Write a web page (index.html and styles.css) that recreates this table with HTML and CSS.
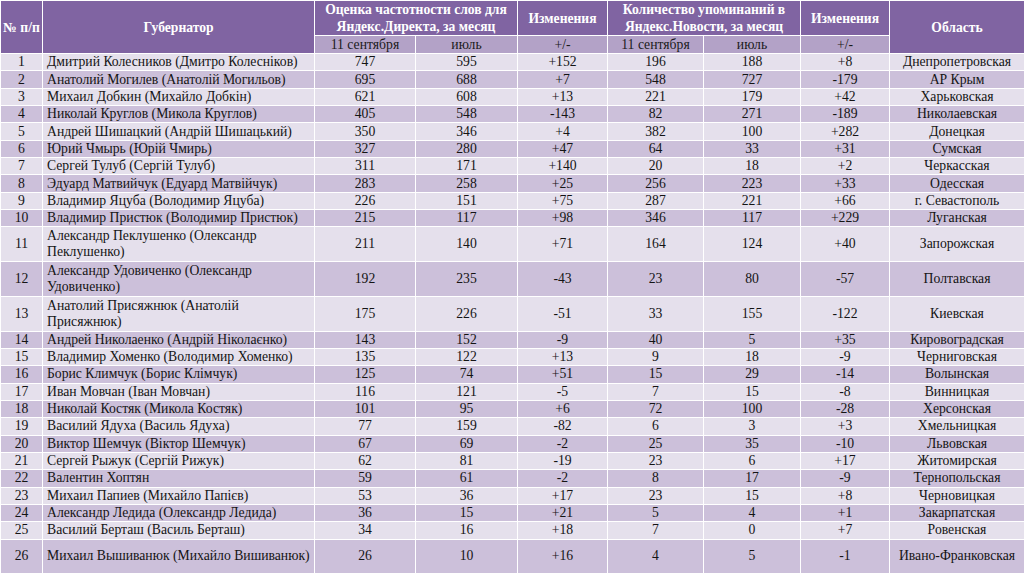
FILE: index.html
```html
<!DOCTYPE html>
<html lang="ru">
<head>
<meta charset="utf-8">
<title>Губернаторы</title>
<link rel="stylesheet" href="styles.css">
</head>
<body>
<table class="grid">
<colgroup>
<col class="c-num"><col class="c-name"><col class="c-a"><col class="c-b"><col class="c-c"><col class="c-d"><col class="c-e"><col class="c-f"><col class="c-reg">
</colgroup>
<thead>
<tr class="h1">
<th rowspan="2">№ п/п</th>
<th rowspan="2">Губернатор</th>
<th colspan="2">Оценка частотности слов для<br>Яндекс.Директа, за месяц</th>
<th>Изменения</th>
<th colspan="2">Количество упоминаний в<br>Яндекс.Новости, за месяц</th>
<th>Изменения</th>
<th rowspan="2">Область</th>
</tr>
<tr class="h2">
<td>11 сентября</td><td>июль</td><td>+/-</td><td>11 сентября</td><td>июль</td><td>+/-</td>
</tr>
</thead>
<tbody>
<tr class="r"><td>1</td><td class="n">Дмитрий Колесников (Дмитро Колесніков)</td><td>747</td><td>595</td><td>+152</td><td>196</td><td>188</td><td>+8</td><td>Днепропетровская</td></tr>
<tr class="r"><td>2</td><td class="n">Анатолий Могилев (Анатолій Могильов)</td><td>695</td><td>688</td><td>+7</td><td>548</td><td>727</td><td>-179</td><td>АР Крым</td></tr>
<tr class="r"><td>3</td><td class="n">Михаил Добкин (Михайло Добкін)</td><td>621</td><td>608</td><td>+13</td><td>221</td><td>179</td><td>+42</td><td>Харьковская</td></tr>
<tr class="r"><td>4</td><td class="n">Николай Круглов (Микола Круглов)</td><td>405</td><td>548</td><td>-143</td><td>82</td><td>271</td><td>-189</td><td>Николаевская</td></tr>
<tr class="r"><td>5</td><td class="n">Андрей Шишацкий (Андрій Шишацький)</td><td>350</td><td>346</td><td>+4</td><td>382</td><td>100</td><td>+282</td><td>Донецкая</td></tr>
<tr class="r"><td>6</td><td class="n">Юрий Чмырь (Юрій Чмирь)</td><td>327</td><td>280</td><td>+47</td><td>64</td><td>33</td><td>+31</td><td>Сумская</td></tr>
<tr class="r"><td>7</td><td class="n">Сергей Тулуб (Сергій Тулуб)</td><td>311</td><td>171</td><td>+140</td><td>20</td><td>18</td><td>+2</td><td>Черкасская</td></tr>
<tr class="r"><td>8</td><td class="n">Эдуард Матвийчук (Едуард Матвійчук)</td><td>283</td><td>258</td><td>+25</td><td>256</td><td>223</td><td>+33</td><td>Одесская</td></tr>
<tr class="r"><td>9</td><td class="n">Владимир Яцуба (Володимир Яцуба)</td><td>226</td><td>151</td><td>+75</td><td>287</td><td>221</td><td>+66</td><td>г. Севастополь</td></tr>
<tr class="r"><td>10</td><td class="n">Владимир Пристюк (Володимир Пристюк)</td><td>215</td><td>117</td><td>+98</td><td>346</td><td>117</td><td>+229</td><td>Луганская</td></tr>
<tr class="r tall"><td>11</td><td class="n">Александр Пеклушенко (Олександр Пеклушенко)</td><td>211</td><td>140</td><td>+71</td><td>164</td><td>124</td><td>+40</td><td>Запорожская</td></tr>
<tr class="r tall"><td>12</td><td class="n">Александр Удовиченко (Олександр Удовиченко)</td><td>192</td><td>235</td><td>-43</td><td>23</td><td>80</td><td>-57</td><td>Полтавская</td></tr>
<tr class="r tall"><td>13</td><td class="n">Анатолий Присяжнюк (Анатолій Присяжнюк)</td><td>175</td><td>226</td><td>-51</td><td>33</td><td>155</td><td>-122</td><td>Киевская</td></tr>
<tr class="r"><td>14</td><td class="n">Андрей Николаенко (Андрій Ніколаєнко)</td><td>143</td><td>152</td><td>-9</td><td>40</td><td>5</td><td>+35</td><td>Кировоградская</td></tr>
<tr class="r"><td>15</td><td class="n">Владимир Хоменко (Володимир Хоменко)</td><td>135</td><td>122</td><td>+13</td><td>9</td><td>18</td><td>-9</td><td>Черниговская</td></tr>
<tr class="r"><td>16</td><td class="n">Борис Климчук (Борис Клімчук)</td><td>125</td><td>74</td><td>+51</td><td>15</td><td>29</td><td>-14</td><td>Волынская</td></tr>
<tr class="r"><td>17</td><td class="n">Иван Мовчан (Іван Мовчан)</td><td>116</td><td>121</td><td>-5</td><td>7</td><td>15</td><td>-8</td><td>Винницкая</td></tr>
<tr class="r"><td>18</td><td class="n">Николай Костяк (Микола Костяк)</td><td>101</td><td>95</td><td>+6</td><td>72</td><td>100</td><td>-28</td><td>Херсонская</td></tr>
<tr class="r"><td>19</td><td class="n">Василий Ядуха (Василь Ядуха)</td><td>77</td><td>159</td><td>-82</td><td>6</td><td>3</td><td>+3</td><td>Хмельницкая</td></tr>
<tr class="r"><td>20</td><td class="n">Виктор Шемчук (Віктор Шемчук)</td><td>67</td><td>69</td><td>-2</td><td>25</td><td>35</td><td>-10</td><td>Львовская</td></tr>
<tr class="r"><td>21</td><td class="n">Сергей Рыжук (Сергій Рижук)</td><td>62</td><td>81</td><td>-19</td><td>23</td><td>6</td><td>+17</td><td>Житомирская</td></tr>
<tr class="r"><td>22</td><td class="n">Валентин Хоптян</td><td>59</td><td>61</td><td>-2</td><td>8</td><td>17</td><td>-9</td><td>Тернопольская</td></tr>
<tr class="r"><td>23</td><td class="n">Михаил Папиев (Михайло Папієв)</td><td>53</td><td>36</td><td>+17</td><td>23</td><td>15</td><td>+8</td><td>Черновицкая</td></tr>
<tr class="r"><td>24</td><td class="n">Александр Ледида (Олександр Ледида)</td><td>36</td><td>15</td><td>+21</td><td>5</td><td>4</td><td>+1</td><td>Закарпатская</td></tr>
<tr class="r"><td>25</td><td class="n">Василий Берташ (Василь Берташ)</td><td>34</td><td>16</td><td>+18</td><td>7</td><td>0</td><td>+7</td><td>Ровенская</td></tr>
<tr class="r tall"><td>26</td><td class="n one">Михаил Вышиванюк (Михайло Вишиванюк)</td><td>26</td><td>10</td><td>+16</td><td>4</td><td>5</td><td>-1</td><td>Ивано-Франковская</td></tr>
</tbody>
</table>
</body>
</html>
```
FILE: styles.css
```css
html, body {
  margin: 0;
  padding: 0;
  background: #ffffff;
  overflow: hidden;
}
.grid {
  width: 1024px;
  table-layout: fixed;
  border-collapse: collapse;
  font-family: "Liberation Serif", "Times New Roman", serif;
  font-size: 13.7px;
  color: #141414;
}
.c-num { width: 42px; }
.c-name { width: 272px; }
.c-a { width: 101px; }
.c-b { width: 102px; }
.c-c { width: 90px; }
.c-d { width: 96px; }
.c-e { width: 97px; }
.c-f { width: 89px; }
.c-reg { width: 135px; }
.grid th, .grid td {
  border: 1px solid #ffffff;
  padding: 0;
  text-align: center;
  vertical-align: middle;
  line-height: 16px;
}
.grid th {
  background: #8064a2;
  color: #ffffff;
  font-weight: bold;
  font-size: 13.6px;
  line-height: 17px;
}
.h1 { height: 35px; }
.h2 { height: 18px; }
.h2 td {
  background: #b3a2c7;
  color: #1a1a1a;
  line-height: 16px;
}
.r { height: 17.35px; }
.r.tall { height: 34.7px; }
.r td { background: #e5e0ec; }
.r:nth-child(even) td { background: #ccc0da; }
.grid td.n {
  text-align: left;
  padding-left: 4px;
}
.grid td.one {
  white-space: nowrap;
}
```
